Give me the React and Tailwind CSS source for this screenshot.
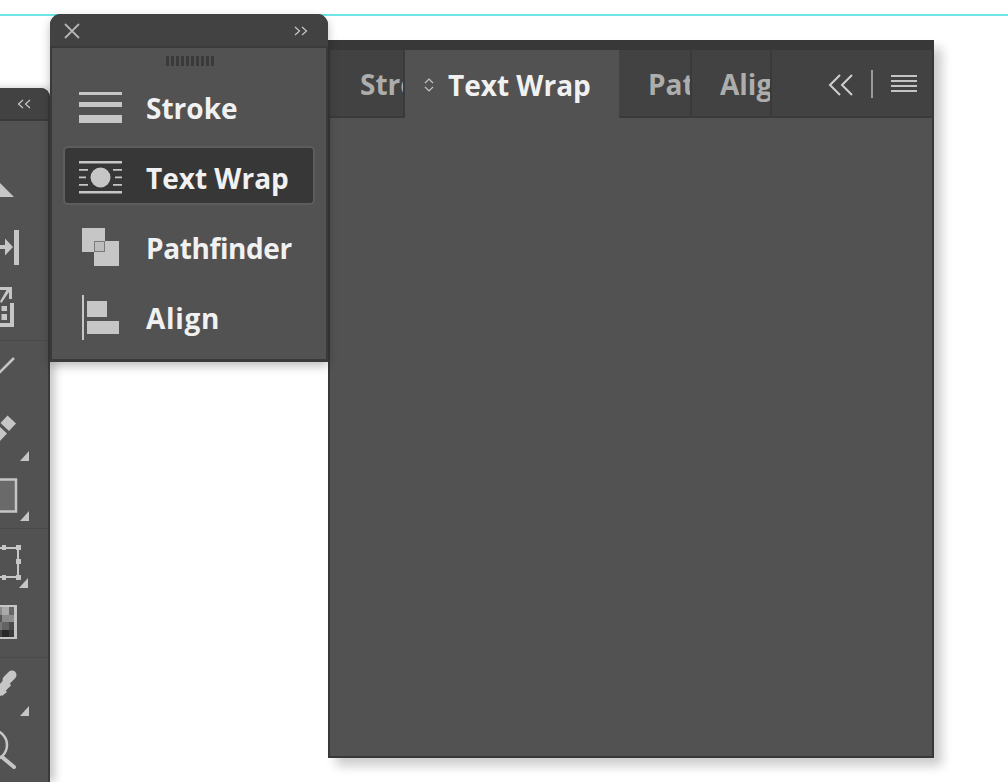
const font = { fontFamily: '"Open Sans", "Liberation Sans", sans-serif' }

const Grey = '#c6c6c6'

const ToolIcon = ({ y, h, children }) => (
    <svg width="48" height={h} viewBox={`0 ${y} 48 ${h}`} fill={Grey} className="block shrink-0">
        {children}
    </svg>
)

const Flyout = ({ x, y }) => <path d={`M${x} ${y}h9v-10z`} />

const Toolbar = () => (
    <div className="absolute left-[-40px] top-[88px] bottom-0 w-[90px] flex flex-col rounded-tr-[9px] bg-[#3a3a3a] pr-[2px] shadow-[5px_0_9px_rgba(0,0,0,0.22)] overflow-hidden">
        <div className="h-[33px] shrink-0 bg-[#424242] flex items-center justify-end pr-[17px] border-b-2 border-[#3a3a3a]">
            <svg width="14" height="10" viewBox="0 0 14 10" fill="none" stroke="#c8c8c8" strokeWidth="1.200">
                <path d="M6 1L1.500 5L6 9M13 1L8.500 5L13 9" />
            </svg>
        </div>
        <div className="flex-1 bg-[#525252] pl-[40px] flex flex-col">
            <div className="border-b border-[#4a4a4a]">
                <ToolIcon y={121} h={219}>
                    <path d="M0 183L14 197H0z" />
                    <path d="M14 230h5v35h-5zM0 245h5v-6.500l8 8.500-8 8.500v-6.500H0z" />
                    <path d="M10 303h4v24H0v-4h10z" />
                    <path d="M1.500 306H7v5H1.500zM1.500 314H7v6H1.500z" />
                    <path d="M0 287h12v12H9v-7L1.500 303 0 301.500 6.500 290H0z" />
                </ToolIcon>
            </div>
            <div className="border-b border-[#4a4a4a]">
                <ToolIcon y={341} h={187}>
                    <path fill="none" stroke={Grey} strokeWidth="2.500" d="M-1 373L14 358" />
                    <path d="M7.500 415.500l8.500 8-7 7.500-8.500-8zM0 427l7 6.500L0 441z" />
                    <Flyout x={20} y={461} />
                    <rect x="-6" y="479.500" width="22" height="32" fill="#6a6a6a" stroke={Grey} strokeWidth="2.500" />
                    <Flyout x={20} y={521} />
                </ToolIcon>
            </div>
            <div className="border-b border-[#4a4a4a]">
                <ToolIcon y={529} h={128}>
                    <path fill="none" stroke={Grey} strokeWidth="2" d="M-2 548H18V577H-2" />
                    <path d="M2 545h4v5H2zM16 545h5v5h-5zM16 559h5v5h-5zM16 575h5v5h-5zM2 575h4v5H2z" />
                    <Flyout x={19} y={588} />
                    <rect x="-4" y="605" width="21" height="34" />
                    <path fill="#8a8a8a" d="M0 607h2v8H0z" />
                    <path fill="#aaaaaa" d="M2 607h7v8H2z" />
                    <path fill="#666666" d="M9 607h5v8H9z" />
                    <path fill="#555555" d="M0 615h2v7H0z" />
                    <path fill="#8a8a8a" d="M2 615h7v7H2z" />
                    <path fill="#8e8e8e" d="M9 615h5v7H9z" />
                    <path fill="#777777" d="M0 622h2v8H0z" />
                    <path fill="#636363" d="M2 622h7v8H2z" />
                    <path fill="#4a4a4a" d="M9 622h5v8H9z" />
                    <path fill="#444444" d="M0 630h2v7H0z" />
                    <path fill="#2a2a2a" d="M2 630h7v7H2z" />
                    <path fill="#3c3c3c" d="M9 630h5v7H9z" />
                </ToolIcon>
            </div>
            <ToolIcon y={658} h={124}>
                <path fill="none" stroke={Grey} strokeWidth="9" strokeLinecap="round" d="M12 675L7 680" />
                <path fill="none" stroke={Grey} strokeWidth="9" d="M8 682L-3 693" />
                <path d="M0 693l5-3 2 2-5 4z" />
                <Flyout x={20} y={716} />
                <circle cx="-8" cy="745" r="15" fill="none" stroke={Grey} strokeWidth="2.500" />
                <path fill="none" stroke={Grey} strokeWidth="4" strokeLinecap="round" d="M2 757l12 10" />
            </ToolIcon>
        </div>
    </div>
)

const StrokeIcon = () => (
    <svg width="44" height="31" viewBox="0 0 44 31" fill={Grey}>
        <rect y="0" width="43" height="3" />
        <rect y="10" width="43" height="5" />
        <rect y="23" width="43" height="8" />
    </svg>
)

const WrapIcon = () => (
    <svg width="44" height="33" viewBox="0 0 44 33" fill={Grey}>
        <rect y="0" width="43" height="2.500" />
        <rect y="30" width="43" height="2.500" />
        <circle cx="21.500" cy="16.500" r="10" />
        <path d="M0 8h9v1.800H0zM34 8h9v1.800h-9zM0 15.500h7v1.800H0zM36 15.500h7v1.800h-7zM0 23h9v1.800H0zM34 23h9v1.800h-9z" />
    </svg>
)

const PathfinderIcon = () => (
    <svg width="44" height="38" viewBox="0 0 44 38" fill={Grey}>
        <rect x="3" y="0" width="23" height="24" />
        <rect x="15" y="13" width="25" height="25" />
        <rect x="15.500" y="13.500" width="10" height="10" fill="#bdbdbd" stroke="#7a7a7a" />
    </svg>
)

const AlignIcon = () => (
    <svg width="44" height="45" viewBox="0 0 44 45" fill={Grey}>
        <rect x="3" y="0" width="2" height="45" />
        <rect x="8" y="6" width="20" height="16" />
        <rect x="8" y="26" width="32" height="13" />
    </svg>
)

const MenuRow = ({ icon, label, active, tracking }) => (
    <div className={`h-[59px] mb-[11px] flex items-center rounded-[5px] pl-[14px] border-2 ${active ? 'bg-[#373737] border-[#5d5d5d]' : 'border-transparent'}`}>
        <span className="w-[67px] shrink-0 flex items-center pt-[3px]">{icon}</span>
        <span className={`text-[28px] font-bold leading-none text-[#f1f1f1] pt-[5px] ${tracking}`} style={font}>{label}</span>
    </div>
)

const MenuPanel = () => (
    <div className="absolute left-[50px] top-[14px] w-[278px] h-[348px] flex flex-col rounded-t-[11px] bg-[#3a3a3a] shadow-[0_4px_10px_rgba(0,0,0,0.25)] overflow-hidden">
        <div className="h-[32px] shrink-0 flex items-center justify-between pl-[13px] pr-[20px] pt-[2px] bg-[#424242]">
            <svg width="18" height="18" viewBox="0 0 18 18" fill="none" stroke="#b4b4b4" strokeWidth="1.800">
                <path d="M2 2L16 16M16 2L2 16" />
            </svg>
            <svg width="14" height="10" viewBox="0 0 14 10" fill="none" stroke="#c8c8c8" strokeWidth="1.200">
                <path d="M1 1L5.500 5L1 9M8 1L12.500 5L8 9" />
            </svg>
        </div>
        <div className="flex-1 mx-[2px] mb-[3px] mt-[2px] bg-[#525252] px-[11px] pt-[8px]">
            <div className="flex justify-center gap-[2px] pl-[1px] h-[10px] mb-[10px]">
                {[...Array(10)].map((_, i) => <span key={i} className="w-[3px] bg-[#3a3a3a]" />)}
            </div>
            <MenuRow icon={<StrokeIcon />} label="Stroke" />
            <MenuRow icon={<WrapIcon />} label="Text Wrap" active />
            <MenuRow icon={<PathfinderIcon />} label="Pathfinder" tracking="tracking-[-0.4px]" />
            <MenuRow icon={<AlignIcon />} label="Align" tracking="tracking-[0.7px]" />
        </div>
    </div>
)

const Tab = ({ label, width, pad }) => (
    <div className={`${width} shrink-0 border-r-2 border-b-2 border-[#3a3a3a] overflow-hidden flex items-center pt-[2px]`}>
        <span className={`text-[28px] font-bold text-[#adadad] leading-none whitespace-nowrap ${pad}`} style={font}>{label}</span>
    </div>
)

const TextWrapPanel = () => (
    <div className="absolute left-[328px] top-[40px] w-[606px] h-[718px] flex flex-col bg-[#383838] p-[2px] pt-[10px] shadow-[8px_8px_10px_rgba(0,0,0,0.2)]">
        <div className="h-[68px] shrink-0 flex bg-[#424242]">
            <Tab label="Stroke" width="w-[75px]" pad="pl-[30px]" />
            <div className="w-[214px] shrink-0 bg-[#525252] flex items-center pl-[18px] pt-[1px] mr-[1px]">
                <svg width="12" height="16" viewBox="0 0 12 16" fill="none" stroke="#c4c4c4" strokeWidth="1.200" className="mr-[13px]">
                    <path d="M2 6L6 2L10 6M2 10L6 14L10 10" />
                </svg>
                <span className="text-[28px] font-bold text-[#f1f1f1] leading-none" style={font}>Text Wrap</span>
            </div>
            <Tab label="Pathfinder" width="w-[72px]" pad="pl-[28px]" />
            <Tab label="Align" width="w-[80px]" pad="pl-[28px]" />
            <div className="flex-1 flex items-center justify-end pr-[15px] pt-[2px] border-b-2 border-[#3a3a3a]">
                <svg width="26" height="22" viewBox="0 0 26 22" fill="none" stroke="#cfcfcf" strokeWidth="2" className="mr-[17px] mt-[2px]">
                    <path d="M12 1L2 11L12 21M24 1L14 11L24 21" />
                </svg>
                <span className="w-[2px] h-[28px] bg-[#9a9a9a] mr-[18px]" />
                <svg width="26" height="20" viewBox="0 0 26 20" fill="#c4c4c4">
                    <path d="M0 1h26v2H0zM0 6h26v2H0zM0 11h26v2H0zM0 16h26v2H0z" />
                </svg>
            </div>
        </div>
        <div className="flex-1 bg-[#525252]" />
    </div>
)

export default function App() {
    return (
        <div className="relative w-[1008px] h-[782px] bg-white overflow-hidden">
            <div className="h-[16px] border-b-2 border-[#6fe6e6]" />
            <Toolbar />
            <TextWrapPanel />
            <MenuPanel />
        </div>
    )
}
